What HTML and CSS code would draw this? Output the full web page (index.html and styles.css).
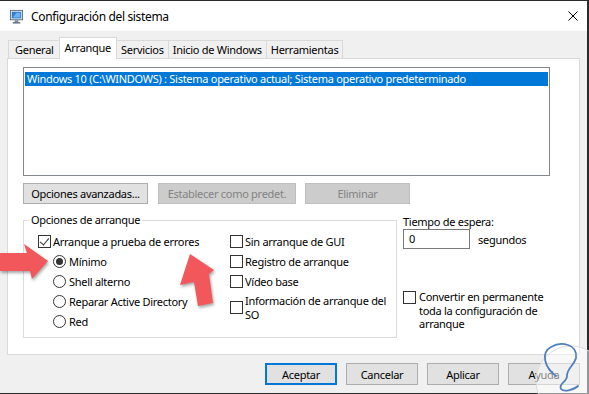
FILE: index.html
```html
<!DOCTYPE html>
<html lang="es">
<head>
  <meta charset="UTF-8">
  <title>Configuración del sistema</title>
  <link rel="stylesheet" href="styles.css">
</head>
<body>

  <div class="window">
    <div class="titlebar">
      <svg class="app-icon" viewBox="0 0 16 16">
        <rect x="1.5" y="1.5" width="13" height="10" fill="#dfe6ee" stroke="#5b6b7c"/>
        <rect x="3" y="3" width="10" height="7" fill="#2f7fd4"/>
        <path d="M4 9 L8 4 L12 4 L12 9 Z" fill="#6fb2f0"/>
        <rect x="6" y="12" width="4" height="2" fill="#7d8a96"/>
        <rect x="4" y="14" width="8" height="1.5" fill="#5b6b7c"/>
      </svg>
      <span class="title">Configuración del sistema</span>
      <svg class="close" viewBox="0 0 10 10">
        <path d="M0.5 0.5 L9.5 9.5 M9.5 0.5 L0.5 9.5" stroke="#000" stroke-width="1"/>
      </svg>
    </div>

    <div class="content">
      <div class="tabs">
        <div class="tab">General</div>
        <div class="tab active">Arranque</div>
        <div class="tab">Servicios</div>
        <div class="tab">Inicio de Windows</div>
        <div class="tab">Herramientas</div>
      </div>

      <div class="panel">
        <div class="os-list">
          <div class="os-item selected">Windows 10 (C:\WINDOWS) : Sistema operativo actual; Sistema operativo predeterminado</div>
        </div>

        <div class="btn-row">
          <button class="btn btn-adv">Opciones avanzadas...</button>
          <button class="btn btn-default" disabled>Establecer como predet.</button>
          <button class="btn btn-del" disabled>Eliminar</button>
        </div>

        <div class="lower">
          <fieldset class="group">
            <legend>Opciones de arranque</legend>
            <div class="group-cols">
              <div class="col col-left">
                <div class="opt"><span class="check checked"></span>Arranque a prueba de errores</div>
                <div class="sub">
                  <div class="opt"><span class="radio checked"></span>Mínimo</div>
                  <div class="opt"><span class="radio"></span>Shell alterno</div>
                  <div class="opt"><span class="radio"></span>Reparar Active Directory</div>
                  <div class="opt"><span class="radio"></span>Red</div>
                </div>
              </div>
              <div class="col">
                <div class="opt"><span class="check"></span>Sin arranque de GUI</div>
                <div class="opt"><span class="check"></span>Registro de arranque</div>
                <div class="opt"><span class="check"></span>Vídeo base</div>
                <div class="opt multi info"><span class="check"></span><span>Información de arranque del<br>SO</span></div>
              </div>
            </div>
          </fieldset>

          <div class="side">
            <div class="side-label">Tiempo de espera:</div>
            <div class="timeout">
              <span class="field">0</span>
              <span>segundos</span>
            </div>
            <div class="opt multi permanent"><span class="check"></span><span>Convertir en permanente<br>toda la configuración de<br>arranque</span></div>
          </div>
        </div>
      </div>
    </div>

    <div class="footer">
      <button class="btn btn-foot primary">Aceptar</button>
      <button class="btn btn-foot">Cancelar</button>
      <button class="btn btn-foot">Aplicar</button>
      <button class="btn btn-foot">Ayuda</button>
    </div>
  </div>

  <!-- flechas y marca de agua encima de todo -->
  <svg class="overlay" viewBox="0 0 589 394">
    <g class="arrows" fill="#f2575b">
      <polygon points="0,253 27,253 24,244 48,261 32,279 30,271 0,271"/>
      <polygon points="190,254 214,270 209,274 213,303 198,306 194,282 180,285"/>
    </g>
    <circle cx="571" cy="381" r="35" fill="rgba(255,255,255,0.5)" stroke="#d9dde2"/>
    <path d="M556 376 C545 368 540 353 551 347 C561 341 578 344 576 358 C574 366 567 368 567 376 C567 382 558 384 561 389 C564 393 575 389 578 386" fill="none" stroke="#4f7fbd" stroke-width="1.8" stroke-linecap="round"/>
  </svg>

</body>
</html>
```

FILE: styles.css
```css
* {
  box-sizing: border-box;
}

body {
  margin: 0;
  width: 589px;
  height: 394px;
  overflow: hidden;
  position: relative;
  font-family: "Noto Sans", sans-serif;
  font-size: 11px;
  letter-spacing: -0.28px;
  color: #000;
  background: #f0f0f0;
}

.window {
  height: 394px;
  border-top: 1px solid #2b2b2b;
  border-right: 2px solid #2b2b2b;
  border-bottom: 1px solid #2b2b2b;
  background: #f0f0f0;
}

.titlebar {
  height: 30px;
  background: #fff;
  display: flex;
  align-items: center;
  padding-left: 9px;
}

.app-icon {
  width: 15px;
  height: 15px;
  margin-right: 7px;
}

.title {
  flex: 1;
  font-size: 12px;
  letter-spacing: -0.35px;
}

.close {
  width: 10px;
  height: 10px;
  margin-right: 9px;
}

.content {
  padding: 6px 7px 0 7px;
}

/* pestañas */
.tabs {
  display: flex;
  align-items: flex-end;
  height: 21px;
  padding-left: 2px;
}

.tab {
  height: 18px;
  line-height: 17px;
  padding: 0 4px;
  border: 1px solid #d9d9d9;
  border-bottom: none;
  margin-left: -1px;
  white-space: nowrap;
}

.tab:first-child {
  padding: 0 5px 0 6px;
}

.tab.active {
  height: 22px;
  line-height: 19px;
  padding: 0 5px;
  margin-bottom: -1px;
  background: #fff;
  position: relative;
  z-index: 1;
}

.panel {
  height: 297px;
  background: #fff;
  border: 1px solid #d9d9d9;
  padding: 8px 15px 0;
}

.os-list {
  width: 527px;
  height: 109px;
  border: 1px solid #828790;
  background: #fff;
}

.os-item {
  margin: 4px 1px 0;
  height: 14px;
  line-height: 14px;
  padding-left: 2px;
  white-space: nowrap;
  overflow: hidden;
}

.os-item.selected {
  background: #0078d7;
  color: #fff;
}

/* botones */
.btn {
  font-family: inherit;
  font-size: 11px;
  letter-spacing: -0.28px;
  color: #000;
  background: #e1e1e1;
  border: 1px solid #adadad;
  padding: 0;
  height: 21px;
}

.btn:disabled {
  background: #cccccc;
  border-color: #bfbfbf;
  color: #838383;
}

.btn-row {
  display: flex;
  gap: 10px;
  margin-top: 7px;
}

.btn-adv {
  width: 125px;
}

.btn-default {
  width: 138px;
}

.btn-del {
  width: 105px;
  margin-left: -1px;
}

.lower {
  display: flex;
  align-items: flex-start;
  gap: 6px;
  margin-top: 9px;
}

.group {
  width: 374px;
  margin: 0;
  border: 1px solid #dcdcdc;
  padding: 4px 0 6px 5px;
}

.group legend {
  padding: 0 2px;
  line-height: 14px;
}

.group-cols {
  display: flex;
  padding-left: 9px;
}

.col-left {
  width: 192px;
}

.sub {
  padding-left: 15px;
}

.opt {
  display: flex;
  align-items: center;
  height: 20px;
  white-space: nowrap;
}

.opt.multi {
  height: auto;
  line-height: 13.5px;
}

.opt.info {
  margin-top: 3px;
}

.check {
  flex: none;
  width: 13px;
  height: 13px;
  border: 1px solid #333;
  background: #fff;
  margin-right: 2px;
  position: relative;
}

.check.checked::after {
  content: "";
  position: absolute;
  left: 3px;
  top: 0;
  width: 4px;
  height: 8px;
  border-right: 1px solid #333;
  border-bottom: 1px solid #333;
  transform: rotate(40deg);
}

.radio {
  flex: none;
  width: 13px;
  height: 13px;
  border: 1px solid #333;
  border-radius: 50%;
  background: #fff;
  margin-right: 3px;
  display: grid;
  place-items: center;
}

.radio.checked::after {
  content: "";
  width: 7px;
  height: 7px;
  border-radius: 50%;
  background: #333;
}

.side {
  padding-top: 1px;
}

.side-label {
  line-height: 15px;
}

.timeout {
  display: flex;
  align-items: center;
  gap: 8px;
}

.field {
  width: 67px;
  height: 20px;
  line-height: 18px;
  border: 1px solid #7a7a7a;
  background: #fff;
  padding-left: 5px;
}

.permanent {
  align-items: flex-start;
  margin-top: 41px;
}

.permanent .check {
  margin-top: 1px;
  margin-right: 3px;
}

.footer {
  display: flex;
  justify-content: flex-end;
  gap: 9px;
  padding: 8px 7px 0 0;
}

.btn-foot {
  width: 72px;
  height: 22px;
}

.btn-foot.primary {
  border: 2px solid #0078d7;
}

.overlay {
  position: absolute;
  top: 0;
  left: 0;
  width: 589px;
  height: 394px;
  pointer-events: none;
}

.arrows {
  filter: drop-shadow(1px 2px 1.5px rgba(0, 0, 0, 0.35));
}
```
